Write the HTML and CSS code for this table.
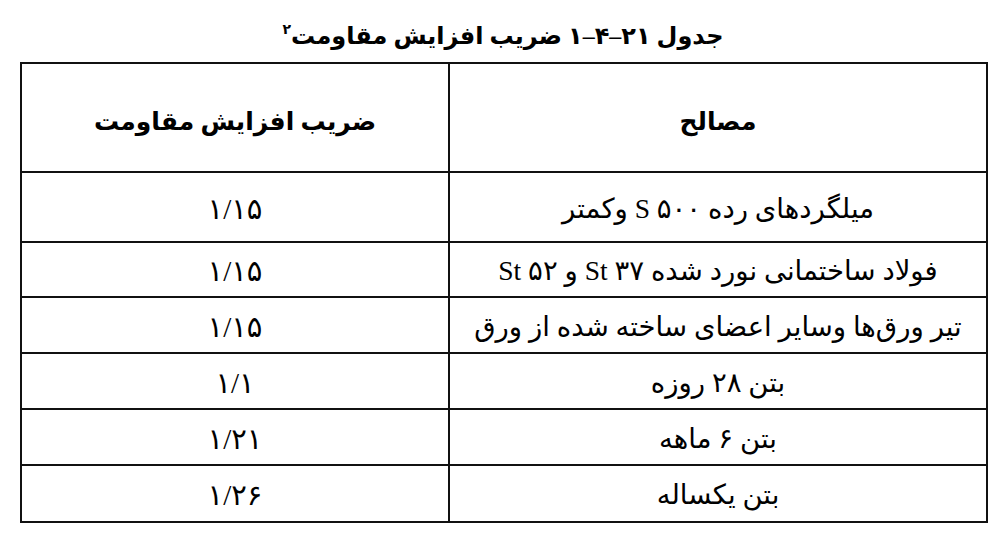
FILE: index.html
```html
<!DOCTYPE html>
<html lang="fa">
<head>
<meta charset="utf-8">
<link rel="stylesheet" href="styles.css">
</head>
<body>
<div class="page">
  <div class="title" dir="rtl">جدول ۲۱&rlm;–&rlm;۴&rlm;–&rlm;۱ ضریب افزایش مقاومت<sup class="note">۲</sup></div>
  <table class="grid" dir="rtl">
    <colgroup>
      <col class="c-mat">
      <col class="c-val">
    </colgroup>
    <tr class="r-head">
      <th>مصالح</th>
      <th>ضریب افزایش مقاومت</th>
    </tr>
    <tr class="r-1">
      <td>میلگردهای رده ۵۰۰ S وکمتر</td>
      <td class="num">۱/۱۵</td>
    </tr>
    <tr class="r-2">
      <td>فولاد ساختمانی نورد شده St ۳۷ و St ۵۲</td>
      <td class="num">۱/۱۵</td>
    </tr>
    <tr class="r-3">
      <td>تیر ورق‌ها وسایر اعضای ساخته شده از ورق</td>
      <td class="num">۱/۱۵</td>
    </tr>
    <tr class="r-3">
      <td>بتن ۲۸ روزه</td>
      <td class="num">۱/۱</td>
    </tr>
    <tr class="r-3">
      <td>بتن ۶ ماهه</td>
      <td class="num">۱/۲۱</td>
    </tr>
    <tr class="r-last">
      <td>بتن یکساله</td>
      <td class="num">۱/۲۶</td>
    </tr>
  </table>
</div>
</body>
</html>
```

FILE: styles.css
```css
html, body {
  margin: 0;
  padding: 0;
  background: #ffffff;
}
body {
  font-family: "Liberation Serif", "DejaVu Sans", serif;
  color: #000;
}
.page {
  width: 966px;
  margin-left: 20px;
  padding-top: 18px;
}
.title {
  text-align: center;
  font-weight: bold;
  font-size: 24px;
  line-height: 36px;
  height: 44px;
}
.note {
  font-size: 14px;
  vertical-align: 10px;
  line-height: 0;
}
.grid {
  width: 966px;
  border-collapse: collapse;
  table-layout: fixed;
}
.c-mat { width: 538px; }
.c-val { width: 428px; }
.grid th, .grid td {
  border: 2px solid #111;
  text-align: center;
  vertical-align: middle;
  padding: 3px 4px 0;
  font-size: 27.5px;
  line-height: 36px;
}
.grid th {
  font-weight: bold;
  font-size: 25px;
  padding-top: 8px;
}
.r-head { height: 109px; }
.r-1 { height: 70px; }
.r-2 { height: 55px; }
.r-3 { height: 56px; }
.r-last { height: 57px; }
.grid td.num {
  direction: ltr;
  font-size: 29px;
}
```
